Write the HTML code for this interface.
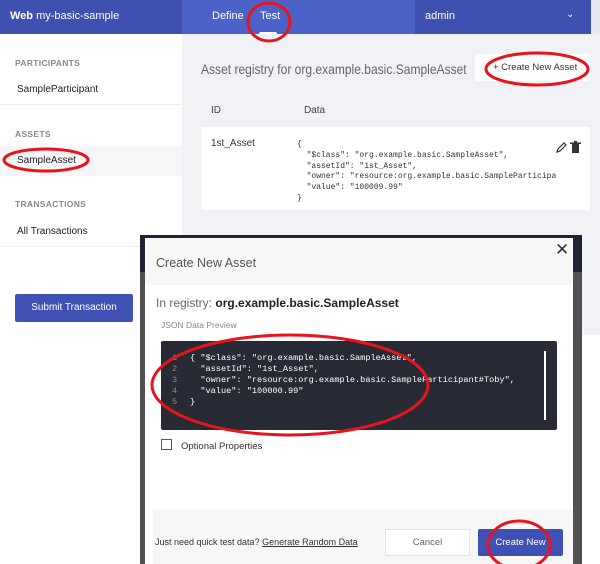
<!DOCTYPE html>
<html><head><style>
*{margin:0;padding:0;box-sizing:border-box}
body{width:600px;height:564px;position:relative;overflow:hidden;font-family:"Liberation Sans",sans-serif;background:#fff;color:#333}
.a{position:absolute;white-space:nowrap}
.mono{font-family:"Liberation Mono",monospace}
</style></head><body>
<div class="a" style="left:0;top:0;width:600px;height:34px;background:#4b63c8"></div>
<div class="a" style="left:0;top:0;width:182px;height:34px;background:#3f51b0"></div>
<div class="a" style="left:415px;top:0;width:176px;height:34px;background:#3f51b0"></div>
<div class="a" style="left:591px;top:0;width:9px;height:34px;background:#e8e9ee"></div>
<div class="a" style="left:10px;top:10px;font-size:11px;color:#fff"><b>Web</b> my-basic-sample</div>
<div class="a" style="left:212px;top:10px;font-size:11px;color:#fff">Define</div>
<div class="a" style="left:260px;top:10px;font-size:11px;color:#fff">Test</div>
<div class="a" style="left:259px;top:32px;width:18px;height:3px;background:#fff;border-radius:2px 2px 0 0"></div>
<div class="a" style="left:425px;top:10px;font-size:11px;color:#fff">admin</div>
<div class="a" style="left:566px;top:9px;font-size:10px;color:#fff">&#8964;</div>

<div class="a" style="left:182px;top:34px;width:418px;height:301px;background:#f1f2f6"></div>
<div class="a" style="left:15px;top:58px;font-size:8.5px;font-weight:bold;color:#888;letter-spacing:.3px">PARTICIPANTS</div>
<div class="a" style="left:17px;top:84px;font-size:10px;color:#222">SampleParticipant</div>
<div class="a" style="left:0;top:104px;width:182px;height:1px;background:#eee"></div>
<div class="a" style="left:15px;top:129px;font-size:8.5px;font-weight:bold;color:#888;letter-spacing:.3px">ASSETS</div>
<div class="a" style="left:0;top:146px;width:182px;height:30px;background:#f6f6f8"></div>
<div class="a" style="left:17px;top:155px;font-size:10px;color:#222">SampleAsset</div>
<div class="a" style="left:15px;top:199px;font-size:8.5px;font-weight:bold;color:#888;letter-spacing:.3px">TRANSACTIONS</div>
<div class="a" style="left:17px;top:226px;font-size:10px;color:#222">All Transactions</div>
<div class="a" style="left:0;top:246px;width:140px;height:1px;background:#eee"></div>
<div class="a" style="left:15px;top:294px;width:118px;height:28px;background:#3f51b5;border-radius:2px;color:#fff;font-size:10px;text-align:center;line-height:28px">Submit Transaction</div>

<div class="a" style="left:201px;top:61px;font-size:14px;color:#666;transform:scaleX(0.86);transform-origin:0 0">Asset registry for org.example.basic.SampleAsset</div>
<div class="a" style="left:475px;top:54px;width:115px;height:27px;background:#fff;border-radius:2px;font-size:9.5px;color:#333;line-height:27px;padding-left:18px">+ Create New Asset</div>
<div class="a" style="left:211px;top:105px;font-size:10px;color:#444">ID</div>
<div class="a" style="left:304px;top:105px;font-size:10px;color:#444">Data</div>
<div class="a" style="left:201px;top:127px;width:389px;height:83px;background:#fff;border-radius:2px"></div>
<div class="a" style="left:211px;top:138px;font-size:10px;color:#333">1st_Asset</div>
<div class="a mono" style="left:297px;top:140px;font-size:8px;line-height:10.8px;color:#333;width:260px;overflow:hidden">{<br>&nbsp;&nbsp;"$class": "org.example.basic.SampleAsset",<br>&nbsp;&nbsp;"assetId": "1st_Asset",<br>&nbsp;&nbsp;"owner": "resource:org.example.basic.SampleParticipant#Toby",<br>&nbsp;&nbsp;"value": "100009.99"<br>}</div>
<svg class="a" style="left:555px;top:141px" width="28" height="12"><path d="M2 11 L3 8 L9 2 L11 4 L5 10 Z" fill="none" stroke="#333" stroke-width="1.2"/><rect x="17" y="3" width="7" height="9" fill="#333"/><rect x="15" y="1.5" width="11" height="1.5" fill="#333"/><rect x="19" y="0" width="3" height="2" fill="#333"/></svg>

<div class="a" style="left:140px;top:235px;width:442px;height:329px;background:#1f2335"></div>
<div class="a" style="left:140px;top:272px;width:442px;height:292px;background:#505050"></div>
<div class="a" style="left:145px;top:238px;width:428px;height:326px;background:#fff"></div>
<div class="a" style="left:145px;top:238px;width:428px;height:47px;background:#f7f7f8"></div>
<div class="a" style="left:156px;top:256px;font-size:12.5px;color:#555">Create New Asset</div>
<div class="a" style="left:555px;top:240px;font-size:17px;color:#333">&#x2715;</div>
<div class="a" style="left:156px;top:296px;font-size:12px;color:#666">In registry: <b style="color:#222">org.example.basic.SampleAsset</b></div>
<div class="a" style="left:161px;top:320px;font-size:8.5px;color:#888">JSON Data Preview</div>
<div class="a" style="left:161px;top:341px;width:396px;height:89px;background:#272a35;border-radius:2px"></div>
<div class="a" style="left:544px;top:351px;width:2px;height:69px;background:#fff"></div>
<div class="a mono" style="left:172px;top:353px;font-size:8.6px;line-height:11px;color:#888">1<br>2<br>3<br>4<br>5</div>
<div class="a mono" style="left:190px;top:353px;font-size:8.6px;line-height:11px;color:#fff">{ "$class": "org.example.basic.SampleAsset",<br>&nbsp;&nbsp;"assetId": "1st_Asset",<br>&nbsp;&nbsp;"owner": "resource:org.example.basic.SampleParticipant#Toby",<br>&nbsp;&nbsp;"value": "100000.99"<br>}</div>
<div class="a" style="left:161px;top:439px;width:11px;height:11px;border:1px solid #3f51b5"></div>
<div class="a" style="left:181px;top:441px;font-size:9.5px;color:#333">Optional Properties</div>
<div class="a" style="left:153px;top:509px;width:420px;height:55px;background:#f7f7f8"></div>
<div class="a" style="left:155px;top:537px;font-size:9px;color:#333">Just need quick test data? <span style="text-decoration:underline">Generate Random Data</span></div>
<div class="a" style="left:385px;top:529px;width:85px;height:27px;background:#fff;border:1px solid #e4e4e4;font-size:9.5px;color:#666;text-align:center;line-height:25px">Cancel</div>
<div class="a" style="left:478px;top:529px;width:85px;height:27px;background:#3f51b5;font-size:9.5px;color:#fff;text-align:center;line-height:27px;border-radius:2px">Create New</div>

<svg class="a" style="left:0;top:0" width="600" height="564">
<g fill="none" stroke="#e8141c" stroke-width="3">
<ellipse cx="269" cy="22" rx="21" ry="19"/>
<ellipse cx="537" cy="69" rx="51" ry="16"/>
<ellipse cx="46" cy="160" rx="42" ry="11"/>
<ellipse cx="290" cy="385" rx="138" ry="50"/>
<ellipse cx="519" cy="545" rx="31" ry="24"/>
</g></svg>
</body></html>
